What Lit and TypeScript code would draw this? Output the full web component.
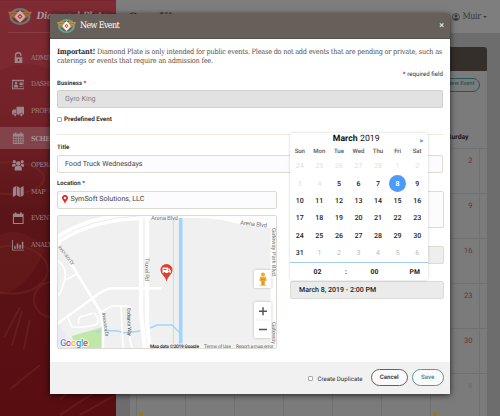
import { LitElement, html, svg, css } from "lit";
import { customElement, property } from "lit/decorators.js";
import { classMap } from "lit/directives/class-map.js";

const wings = html`<svg viewBox="0 0 40 36" preserveAspectRatio="none">
  <circle cx="20" cy="18" r="15.5" fill="none" stroke="#62a58e" stroke-width="4.5" />
  <path d="M0 8H17L20 12L23 8H40C39 13 37 15 34 16C33 19 31 21 28 22C27 25 25 27 22 28H18C15 27 13 25 12 22C9 21 7 19 6 16C3 15 1 13 0 8Z" fill="#c59450" />
  <path d="M4 12H14M8 17H14M27 12H36M27 17H33" stroke="#7d6547" stroke-width="1.6" />
  <path d="M20 5L29 18L20 31L11 18Z" fill="#fff" />
  <path d="M20 12L24.5 18L20 24L15.500 18Z" fill="#d5442b" />
  <circle cx="20" cy="18" r="1.800" fill="#fff" />
</svg>`;

const icons: Record<string, unknown> = {
  lock: svg`<path d="M4 8V5a3 3 0 0 1 6 0v1" fill="none" stroke="currentColor" stroke-width="1.500"/><path fill="currentColor" fill-rule="evenodd" d="M3 7h8.500v6.500H3zM6.500 9v2.500h1.500V9z"/>`,
  card: svg`<path fill="currentColor" fill-rule="evenodd" d="M0 2h14v10.500H0zM1 3.500v8h12v-8z"/><circle cx="4.500" cy="6" r="1.400" fill="currentColor"/><path fill="currentColor" d="M2 10.500C2 8 3 7.600 4.500 7.600S7 8 7 10.500zM8.500 5h3.500v3H8.500zM8.500 9.200h3.500v1H8.500z"/>`,
  truck: svg`<path fill="currentColor" d="M5 2h9v8.500H5zM1.500 5h3v5.500H0V7z"/><circle cx="3.500" cy="11" r="1.800" fill="currentColor" stroke="#701d23" stroke-width=".6"/><circle cx="10.500" cy="11" r="1.800" fill="currentColor" stroke="#701d23" stroke-width=".6"/>`,
  calendar: svg`<path fill="currentColor" fill-rule="evenodd" d="M1 2h2V.5h2V2h4V.5h2V2h2v11.500H1zM2 5v1.800h2V5zm3 0v1.800h1.700V5zm2.700 0v1.800h1.700V5zm2.700 0v1.800H12V5zM2 7.600v1.800h2V7.600zm3 0v1.800h1.700V7.600zm2.700 0v1.800h1.700V7.600zm2.700 0v1.800H12V7.600zM2 10.300v1.800h2v-1.800zm3 0v1.800h1.700v-1.800zm2.700 0v1.800h1.700v-1.800zm2.700 0v1.800H12v-1.800z"/>`,
  users: svg`<g fill="currentColor"><circle cx="7" cy="5" r="2.500"/><circle cx="2.600" cy="3" r="1.800"/><circle cx="11.400" cy="3" r="1.800"/><path d="M3 13V10Q3 7.800 5 7.800H9Q11 7.800 11 10V13zM0 8.500V6.500Q.5 5.300 3.500 5.300L4.500 7.200Q2.800 7.500 2.600 8.800zM14 8.500V6.500Q13.500 5.300 10.500 5.300L9.500 7.200Q11.200 7.500 11.400 8.800z"/></g>`,
  map: svg`<path fill="currentColor" d="M1 3l3.600-2v10.500L1 13.500zM5.300 1l3.400 2v10.500l-3.400-2zM9.500 3L13 1v10.500l-3.500 2z"/>`,
  blank: svg`<path fill="currentColor" fill-rule="evenodd" d="M1 2h2V.5h2V2h4V.5h2V2h2v11.500H1zM2.200 5.500v6.800h9.600V5.500z"/>`,
  chart: svg`<path fill="currentColor" d="M0 1h1v11h13v1H0zM2.500 8h1.700v3H2.500zM5.300 5h1.700v6H5.300zM8.100 6.500h1.700v4.500H8.100zM11 3h1.700v8H11z"/>`,
};

@customElement("side-nav")
export class SideNav extends LitElement {
  static styles = css`
    :host { display: block; position: relative; width: 115.5px; height: 416px; flex: none; overflow: hidden;
      background: linear-gradient(#7b2730 0, #742229 110px, #5b1519 210px, #5a1115 300px, #580d11); }
    .photo { position: absolute; inset: 0; width: 100%; height: 100%; }
    .inner { position: relative; }
    .brand { display: flex; align-items: center; gap: 4.5px; height: 32px; margin: 0 0 0 8px; border-bottom: 1px solid #8b3d43; }
    .logo { width: 24px; height: 17px; opacity: .62; }
    .logo svg { width: 100%; height: 100%; display: block; }
    .name { font: italic bold 10px "DejaVu Serif Condensed", "DejaVu Serif", serif; color: #a6979a; white-space: nowrap; letter-spacing: -.3px; }
    nav { display: flex; flex-direction: column; gap: 4.5px; margin-top: 13.5px; }
    .item { display: flex; align-items: center; height: 22.300px; padding-left: 11.5px; gap: 7px; color: #9c8588;
      font: 7px "DejaVu Serif Condensed", "DejaVu Serif", serif; letter-spacing: -.4px; white-space: nowrap; }
    .item svg { width: 12.500px; height: 12.500px; flex: none; }
    .active { background: #83434a; }
    .active .lbl { font-weight: bold; color: #aa9295; }
  `;
  private items = [
    ["lock", "ADMIN"], ["card", "DASHBOARD"], ["truck", "PROFILE"], ["calendar", "SCHEDULE"],
    ["users", "OPERATIONS"], ["map", "MAP"], ["blank", "EVENTS"], ["chart", "ANALYTICS"],
  ];
  render() {
    return html`
      <svg class="photo" viewBox="0 0 116 416">
        <g fill="none" stroke="#7b3029" stroke-width="2" opacity=".4">
          <ellipse cx="12" cy="270" rx="36" ry="24" /><ellipse cx="54" cy="300" rx="20" ry="18" />
          <ellipse cx="10" cy="178" rx="34" ry="16" />
          <path d="M4 338L20 308M12 346L22 312M24 350L30 320M60 416L112 382M80 416L116 396M60 400L90 378M10 390L40 366" />
        </g>
        <path d="M0 70Q30 55 60 75T116 60V0H0Z" fill="#8a3940" opacity=".25" />
        <path d="M0 235Q22 224 45 250Q30 288 0 296Z" fill="#7a2a20" opacity=".25" />
      </svg>
      <div class="inner">
        <div class="brand"><span class="logo">${wings}</span><span class="name">Diamond Plate</span></div>
        <nav>
          ${this.items.map(([icon, label]) => html`
            <div class=${classMap({ item: true, active: label === "SCHEDULE" })}>
              <svg viewBox="0 0 14 14">${icons[icon]}</svg><span class="lbl">${label}</span>
            </div>`)}
        </nav>
      </div>`;
  }
}

@customElement("schedule-page")
export class SchedulePage extends LitElement {
  static styles = css`
    :host { display: flex; flex-direction: column; flex: 1; height: 416px; min-width: 0; background: #6d6d6d; font-family: Roboto, sans-serif; overflow: hidden; }
    .top { display: flex; justify-content: space-between; align-items: center; height: 33px; padding: 0 13px; background: #7e7e7e; flex: none;
      font: 9px "DejaVu Serif Condensed", "DejaVu Serif", serif; color: #3c3a39; }
    .org { font-size: 11.500px; font-weight: bold; padding-top: 1px; }
    .user { display: flex; align-items: center; gap: 2.500px; letter-spacing: -.5px; }
    .user svg { width: 8px; height: 8px; }
    .caret { border: 2px solid transparent; border-top-color: #3c3a39; border-bottom: 0; }
    .card { margin: 14px 13px 0 14px; height: 369px; background: #7b7b7b; border-radius: 3px 3px 0 0; flex: none; }
    .bar { height: 24px; background: #352f2c; border-radius: 3px 3px 0 0; }
    .tools { display: flex; justify-content: flex-end; padding: 7px 7px 0 0; height: 61px; box-sizing: border-box; }
    .new { height: 13.500px; box-sizing: border-box; width: 44px; padding-right: 4.500px; border: 1px solid #2d5554; border-radius: 7px; font: 500 5.800px/11.500px Roboto, sans-serif; color: #2d5554; text-align: right; white-space: nowrap; }
    .days, .week { display: grid; grid-template-columns: repeat(7, 49.07px); margin-left: 6.500px; }
    .days { height: 15.500px; font: bold 6.800px/10px Roboto, sans-serif; color: #181818; text-align: center; }
    .week { height: 45px; box-sizing: border-box; border-top: 1px solid #707070; }
    .cell { border-left: 1px solid #707070; padding: 7px 7px 0; text-align: right; font-size: 7.500px; color: #6a3536; position: relative; }
    .cell:last-child { border-right: 1px solid #707070; margin-right: -1px; }
    .muted { color: #696969; }
    .dot { position: absolute; left: 2px; top: 38px; width: 4px; height: 4px; border-radius: 50%; background: #8f7a22; }
  `;
  render() {
    const days = ["Sunday", "Monday", "Tuesday", "Wednesday", "Thursday", "Friday", "Saturday"];
    return html`
      <div class="top">
        <span class="org">Gyro King</span>
        <span class="user">
          <svg viewBox="0 0 16 16"><circle cx="8" cy="8" r="7" fill="none" stroke="#3c3a39" stroke-width="1.500"/><circle cx="8" cy="6" r="3" fill="#3c3a39"/><path d="M2.500 12.500Q4 10 8 10T13.500 12.500Q11 15 8 15T2.500 12.500Z" fill="#3c3a39"/></svg>
          Muir <i class="caret"></i>
        </span>
      </div>
      <div class="card">
        <div class="bar"></div>
        <div class="tools"><div class="new">New Event</div></div>
        <div class="days">${days.map((d) => html`<span>${d}</span>`)}</div>
        ${[2, 9, 16, 23, 30, 6].map((last, row) => html`
          <div class="week">
            ${days.map((_, i) => html`<div class=${classMap({ cell: true, muted: row === 5 })}>
              ${i === 6 ? last : ""}${row === 5 && (i === 0 || i === 6) ? html`<i class="dot"></i>` : ""}
            </div>`)}
          </div>`)}
      </div>`;
  }
}

@customElement("location-map")
export class LocationMap extends LitElement {
  static styles = css`
    :host { display: block; width: 220px; height: 133.500px; box-sizing: border-box; border: 1px solid #dedad2; border-radius: 2px; overflow: hidden; }
    svg { display: block; margin: -1px; }
    text { font-family: Roboto, sans-serif; }
    .road { fill: none; stroke: #fff; stroke-linejoin: round; }
    .street { font-size: 6px; fill: #75797d; }
    .small { font-size: 5px; }
    .dark { fill: #444; }
    .g { font: 500 9.500px Roboto, sans-serif; }
    .credit { font-size: 4.800px; fill: #555; }
    .strong { fill: #222; font-weight: 500; }
    .controls { filter: drop-shadow(0 .5px 1px #0004); }
  `;
  render() {
    return html`<svg width="220" height="134" viewBox="0 0 220 134">
      <rect width="220" height="134" fill="#f0f0f0" />
      <path d="M0 106L18 134H0Z" fill="#e8ebf0" />
      <path d="M15 121L46 112V134H18Z" fill="#bfe8a8" />
      <path d="M116.500 0V134" stroke="#cfe3d4" stroke-width="1.200" />
      <path d="M39 117L50 115.500L61 116L68 118L83 116M93 113L100 110H115L123 118" fill="none" stroke="#a5d3fa" stroke-width="1.400" />
      <path d="M75 0H220V13Q190 12 165 5Q145 2 125 3L95 5Z" fill="#fdfdfd" />
      <path d="M123.700 3V134" stroke="#a0d4fd" stroke-width="3.600" />
      <path class="road" d="M0 25Q32 3 82 1" stroke-width="8.500" />
      <path d="M0 25Q32 3 82 1" fill="none" stroke="#e6e6e6" stroke-width=".8" />
      <path class="road" d="M84.200 2V100L88 134" stroke-width="4.200" />
      <path class="road" d="M89.800 2V100Q90 118 93.500 134" stroke-width="4.200" />
      <path class="road" d="M0 26L43 96L46 112V134" stroke-width="2.600" />
      <path class="road" d="M0 109L36 83Q48 73.300 55 73.300H105" stroke-width="2.400" />
      <path class="road" d="M0 45Q10 52 8 62Q5 79 0 81M8 65L20 59M11 103L15 112Q26 113 38 110Q45 106 37 98M44 97L55 91H72L75 94M64 91L66 133M71 91L73 125L75 133M22 109Q20 101 27 101L36 98" stroke-width="1.700" />
      <path d="M213.500 8V134H220V8Z" fill="#fff" />
      <text class="street" x="94" y="5" textLength="27">Arena Blvd</text>
      <text class="street" x="183" y="9.500" textLength="27" transform="rotate(6 183 9)">Arena Blvd</text>
      <text class="street" transform="translate(88 43) rotate(90)" textLength="23">Truxel Rd</text>
      <text class="street small" transform="translate(1 32) rotate(53)" textLength="23">Innovator Dr</text>
      <text class="street small" transform="translate(45 98) rotate(82)" textLength="24">Innovator Dr</text>
      <text class="street small dark" transform="translate(70 93) rotate(88)" textLength="28">Endeavor Way</text>
      <text class="street" transform="translate(214.500 13) rotate(90)" textLength="48">Gateway Park Blvd</text>
      <text class="street" transform="translate(214.500 107) rotate(90)" textLength="22">Gateway</text>
      <path d="M109.500 66.500Q108 62 105.500 59.500A6 6 0 1 1 113.500 59.500Q111 62 109.500 66.500Z" fill="#e0402d" />
      <path d="M105.500 52.500H110.800V53.600H112.400L113.800 55.500V58H105.500Z" fill="#fff" />
      <path d="M106.500 54.500H109.500M111.400 54.500V56" stroke="#e0402d" stroke-width=".9" />
      <circle cx="107.500" cy="58" r=".9" fill="#e0402d" /><circle cx="112" cy="58" r=".9" fill="#e0402d" />
      <g class="controls"><rect x="197" y="55" width="17.500" height="18" rx="1" fill="#fff" /><rect x="197" y="87" width="17.500" height="36" rx="1" fill="#fff" /></g>
      <path d="M199 105H213" stroke="#e8e8e8" stroke-width=".7" />
      <path d="M202 96.200H210M206 92.200V100.200M202 114.500H210" stroke="#555" stroke-width="1.500" />
      <ellipse cx="206" cy="70" rx="3.500" ry="1" fill="#d8d3c8" />
      <circle cx="206" cy="59.500" r="2" fill="#f2a92a" />
      <path d="M203 61.800H209L209.500 66H208L207.600 70.300H204.400L204 66H202.500Z" fill="#f2a92a" />
      <path d="M203.800 64.500H208.200M206 66V70" stroke="#c47f17" stroke-width=".6" />
      <text class="g" x="3" y="131.300" textLength="28" stroke="#fff" stroke-width="1.500" paint-order="stroke"><tspan fill="#4285f4">G</tspan><tspan fill="#ea4335">o</tspan><tspan fill="#fbbc05">o</tspan><tspan fill="#4285f4">g</tspan><tspan fill="#34a853">l</tspan><tspan fill="#ea4335">e</tspan></text>
      <rect x="92" y="128.500" width="127" height="5" fill="#f5f5f5" opacity=".8" />
      <text class="credit strong" x="93" y="132.600" textLength="49">Map data ©2019 Google</text>
      <text class="credit" x="147" y="132.600" textLength="27">Terms of Use</text>
      <text class="credit" x="179" y="132.600" textLength="37.500">Report a map error</text>
    </svg>`;
  }
}

@customElement("date-picker")
export class DatePicker extends LitElement {
  @property({ type: Number }) selected = 8;
  static styles = css`
    :host { display: block; box-sizing: border-box; width: 137.500px; height: 147.500px; background: #fff; border-radius: 3px; box-shadow: 0 0 3px #00000030; font-family: Roboto, sans-serif; color: #222; }
    .month { display: flex; justify-content: center; align-items: center; position: relative; height: 13.500px; padding-right: 5px; font-size: 8.700px; gap: 2.500px; color: #111; }
    .next { position: absolute; right: 4.500px; top: 3.500px; font: bold 7px/10px Roboto, sans-serif; color: #2c8af8; }
    .grid { display: grid; grid-template-columns: repeat(7, 19.570px); }
    .head { height: 11.500px; font: 500 6px/11px Roboto, sans-serif; color: #555; text-align: center; }
    .d { display: flex; align-items: center; justify-content: center; height: 17.400px; font-size: 7px; font-weight: 500; }
    .out { color: #e1e1e1; font-weight: 400; }
    .later { color: #b9b9b9; font-weight: 400; }
    .on { width: 17.400px; margin: 0 auto; border-radius: 50%; background: #4d9bf6; color: #fff; font-weight: bold; }
    .time { display: flex; align-items: center; height: 17.500px; border-top: 1px solid #a4cbf8; font-size: 6.800px; font-weight: bold; text-align: center; }
    .time span { width: 55px; } .time .colon { width: 2px; } .time .pm { width: 25.500px; }
  `;
  render() {
    const cells = Array.from({ length: 42 }, (_, i) => i - 4);
    return html`
      <div class="month"><b>March</b><span>2019</span><span class="next">&gt;</span></div>
      <div class="grid">
        ${["Sun", "Mon", "Tue", "Wed", "Thu", "Fri", "Sat"].map((d) => html`<span class="head">${d}</span>`)}
        ${cells.map((n) => html`<span class=${classMap({ d: true, out: n < 5, later: n > 31, on: n === this.selected })}>${n < 1 ? n + 28 : n > 31 ? n - 31 : n}</span>`)}
      </div>
      <div class="time"><span>02</span><span class="colon">:</span><span>00</span><span class="pm">PM</span></div>`;
  }
}

@customElement("event-dialog")
export class EventDialog extends LitElement {
  static styles = css`
    :host { position: absolute; left: 50px; top: 13.500px; width: 400px; height: 380.500px; display: flex; flex-direction: column; background: #fff; box-shadow: 0 1px 6px #000b; font-family: Roboto, sans-serif; color: #333; }
    header { display: flex; align-items: center; gap: 4px; height: 25.500px; box-sizing: border-box; padding: 0 6px 0 7px; background: #67605a; border-bottom: 1.500px solid #56504b; color: #fff; flex: none; }
    .logo { width: 19px; height: 14px; }
    .logo svg { display: block; width: 100%; height: 100%; }
    h1 { margin: 0; flex: 1; font: 9px "DejaVu Serif Condensed", "DejaVu Serif", serif; letter-spacing: -.68px; padding-top: 1px; }
    .close { font: bold 9px/10px Roboto, sans-serif; color: #ddd; }
    main { flex: 1; padding: 7.500px 7px 0; font-size: 7px; }
    p { margin: 0; font: 7.300px/9.500px "DejaVu Serif Condensed", "DejaVu Serif", serif; color: #55504c; white-space: nowrap; height: 19px; }
    p b { color: #35302d; }
    .l1 { letter-spacing: -.23px; }
    .l2 { letter-spacing: -.21px; }
    .req { height: 10px; margin-top: 3px; font: 6.200px/10px Roboto, sans-serif; text-align: right; }
    em { color: #d0021b; font-style: normal; font-weight: bold; }
    label { display: block; height: 10px; margin-bottom: 1.500px; font: bold 6.100px/10px Roboto, sans-serif; color: #3c3835; }
    .field { height: 18px; box-sizing: border-box; border: 1px solid #dedbd3; border-radius: 2px; padding-left: 7px; background: #fcfcfe; font: 7.150px/16.500px Roboto, sans-serif; color: #444; }
    .off { background: #e2e2e2; color: #7b7b7b; border-color: #d2d0c6; }
    .check { display: flex; align-items: center; gap: 2px; height: 10px; margin-top: 6px; font: bold 6.250px/10px Roboto, sans-serif; }
    .box { width: 5px; height: 5px; box-sizing: border-box; border: .8px solid #aaa; border-radius: 1px; background: #fff; }
    hr { border: 0; height: 1px; background: #efe9e3; margin: 10px 0 8px; }
    .cols { display: grid; grid-template-columns: 220px 153.500px; column-gap: 13px; margin-top: 6.500px; }
    .loc { display: flex; align-items: center; gap: 3px; padding-left: 3.500px; }
    .loc svg { width: 6px; height: 9px; }
    location-map { margin-top: 6.500px; }
    .right { padding-top: 11.500px; }
    .area { height: 37px; }
    .light { background: #eee; }
    .start { background: #ebebeb; color: #222; padding-left: 8px; margin-top: 17.500px; font-size: 7.050px; font-weight: 500; }
    .end { margin-top: 18px; }
    date-picker { position: absolute; left: 240px; top: 119px; }
    footer { display: flex; align-items: center; height: 32px; padding: 0 6.500px; background: #f1f1f1; flex: none; }
    .dup { display: flex; align-items: center; gap: 4px; margin-left: auto; margin-right: 8px; font-size: 6.150px; padding-top: 1px; }
    .btn { box-sizing: border-box; height: 17px; border: 1.200px solid #67605a; border-radius: 9px; font: bold 6.150px/14.500px Roboto, sans-serif; text-align: center; color: #514a45; width: 37.500px; background: #fafafa; margin-top: -1px; }
    .save { width: 31.500px; margin-left: 4px; border-color: #5a9795; color: #5a9795; }
  `;
  render() {
    return html`
      <header><span class="logo">${wings}</span><h1>New Event</h1><span class="close">×</span></header>
      <main>
        <p><span class="l1"><b>Important!</b> Diamond Plate is only intended for public events. Please do not add events that are pending or private, such as</span><br><span class="l2">caterings or events that require an admission fee.</span></p>
        <div class="req"><em>*</em> required field</div>
        <label>Business <em>*</em></label>
        <div class="field off">Gyro King</div>
        <div class="check"><i class="box"></i>Predefined Event</div>
        <hr>
        <label>Title</label>
        <div class="field">Food Truck Wednesdays</div>
        <div class="cols">
          <div>
            <label>Location <em>*</em></label>
            <div class="field loc"><svg viewBox="0 0 12 18"><path fill="#e02a20" fill-rule="evenodd" d="M6 18Q5 13 1.500 9.500A5.800 5.800 0 1 1 10.500 9.500Q7 13 6 18ZM6 3.500A2.500 2.500 0 1 0 6 8.500A2.500 2.500 0 1 0 6 3.500Z"/></svg>SymSoft Solutions, LLC</div>
            <location-map></location-map>
          </div>
          <div class="right">
            <div class="field area"></div>
            <div class="field light end"></div>
            <div class="field start">March 8, 2019 - 2:00 PM</div>
          </div>
        </div>
      </main>
      <footer>
        <span class="dup"><i class="box"></i>Create Duplicate</span>
        <div class="btn">Cancel</div><div class="btn save">Save</div>
      </footer>
      <date-picker></date-picker>`;
  }
}

@customElement("app-root")
export class AppRoot extends LitElement {
  static styles = css`
    :host { display: flex; position: relative; width: 500px; height: 416px; overflow: hidden; text-rendering: geometricPrecision; }
  `;
  render() {
    return html`<side-nav></side-nav><schedule-page></schedule-page><event-dialog></event-dialog>`;
  }
}
